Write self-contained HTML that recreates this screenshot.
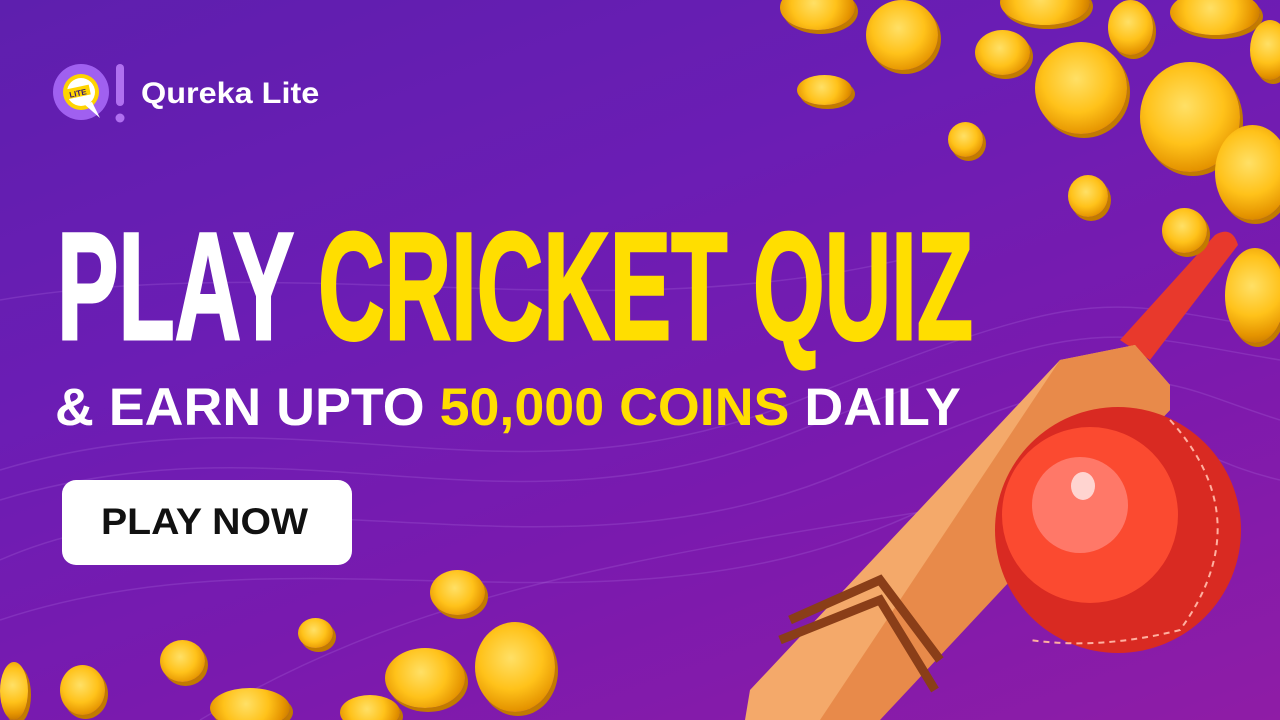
<!DOCTYPE html>
<html><head><meta charset="utf-8"><style>
*{margin:0;padding:0}
html,body{width:1280px;height:720px;overflow:hidden}
body{position:relative;font-family:"Liberation Sans",sans-serif;
background:linear-gradient(160deg,#5e1fae 0%,#6b1db4 35%,#7a1aae 65%,#8f1ca6 100%)}
.t{position:absolute;white-space:nowrap;font-weight:bold;transform-origin:0 0}
.coin{position:absolute;border-radius:50%;background:radial-gradient(circle at 45% 40%,#ffe066 0,#ffc21a 45%,#e59400 75%,#b86a00 100%);box-shadow:3px 4px 0 #c27a00}
</style></head><body>
<svg style="position:absolute;left:0;top:0" width="1280" height="720">
<g fill="none" stroke="#b070e0" stroke-opacity=".25" stroke-width="1.5">
<path d="M0 470 C300 380 500 520 800 400 S1100 300 1280 330"/>
<path d="M0 500 C300 410 500 550 800 430 S1100 330 1280 360"/>
<path d="M0 560 C250 450 550 600 850 470 S1150 380 1280 420"/>
<path d="M0 620 C300 520 600 650 900 520 S1150 450 1280 480"/>
<path d="M200 720 C400 600 600 560 1000 500"/>
<path d="M0 300 C300 250 600 330 900 260"/>
</g>
</svg>
<svg style="position:absolute;left:48px;top:60px" width="85" height="68">
<circle cx="33" cy="32" r="28" fill="#a060f0"/>
<circle cx="33" cy="32" r="18" fill="#ffd400"/>
<circle cx="33" cy="32" r="14" fill="#fff"/>
<path d="M36 44 L52 58 L44 42Z" fill="#fff"/>
<rect x="18" y="27" width="24" height="10" fill="#ffd400" transform="rotate(-12 30 32)"/>
<text x="21" y="36" font-size="8" font-weight="bold" fill="#3a1a70" font-family="Liberation Sans" transform="rotate(-12 30 32)">LITE</text>
<rect x="68" y="4" width="8" height="42" rx="4" fill="#b070f0"/>
<circle cx="72" cy="58" r="4.5" fill="#b070f0"/>
</svg>
<div class="t" style="left:141px;top:77px;font-size:30px;color:#fff;transform:scaleX(1.08)">Qureka Lite</div>
<div class="t" style="left:57px;top:210px;font-size:153px;line-height:153px;color:#fff;transform:scaleX(.602);-webkit-text-stroke:3px currentColor">PLAY <span style="color:#ffde00">CRICKET QUIZ</span></div>
<div class="t" style="left:55px;top:381px;font-size:53px;line-height:53px;color:#fff;transform:scaleX(1.015)">&amp; EARN UPTO <span style="color:#ffde00">50,000 COINS</span> DAILY</div>
<div style="position:absolute;left:62px;top:480px;width:290px;height:85px;background:#fff;border-radius:14px"></div>
<div class="t" style="left:101px;top:502px;font-size:37px;line-height:40px;color:#111;transform:scaleX(1.06)">PLAY NOW</div>
<svg style="position:absolute;left:0;top:0" width="1280" height="720">
<path d="M1120 340 L1215 235 Q1232 225 1238 245 L1150 360Z" fill="#e8392c"/>
<path d="M1060 360 L1135 345 L1170 385 L1170 410 L870 720 L745 720 L750 690 Z" fill="#f4a96a"/>
<path d="M1060 360 L1135 345 L1170 385 L1170 410 L880 720 L820 720 Z" fill="#e88a4a"/>
<path d="M790 620 L880 580 L940 660" fill="none" stroke="#8a3e18" stroke-width="9"/>
<path d="M780 640 L880 600 L935 690" fill="none" stroke="#8a3e18" stroke-width="9"/>
<circle cx="1118" cy="530" r="123" fill="#d92a22"/>
<circle cx="1090" cy="515" r="88" fill="#fb4a30"/>
<circle cx="1080" cy="505" r="48" fill="#ff7868"/>
<ellipse cx="1083" cy="486" rx="12" ry="14" fill="#ffd4d0"/>
<path d="M1170 420 Q1260 520 1180 630 Q1100 650 1030 640" fill="none" stroke="#ffb0a0" stroke-width="2" stroke-dasharray="6 5"/>
</svg>
<div class="coin" style="left:780px;top:-15px;width:75px;height:45px"></div>
<div class="coin" style="left:866px;top:0px;width:72px;height:70px"></div>
<div class="coin" style="left:975px;top:30px;width:55px;height:45px"></div>
<div class="coin" style="left:797px;top:75px;width:55px;height:30px"></div>
<div class="coin" style="left:1000px;top:-20px;width:90px;height:45px"></div>
<div class="coin" style="left:1035px;top:42px;width:92px;height:92px"></div>
<div class="coin" style="left:1108px;top:0px;width:45px;height:55px"></div>
<div class="coin" style="left:1170px;top:-10px;width:90px;height:45px"></div>
<div class="coin" style="left:1140px;top:62px;width:100px;height:110px"></div>
<div class="coin" style="left:1250px;top:20px;width:40px;height:60px"></div>
<div class="coin" style="left:1215px;top:125px;width:75px;height:95px"></div>
<div class="coin" style="left:948px;top:122px;width:35px;height:35px"></div>
<div class="coin" style="left:1068px;top:175px;width:40px;height:42px"></div>
<div class="coin" style="left:1162px;top:208px;width:45px;height:45px"></div>
<div class="coin" style="left:1225px;top:248px;width:60px;height:95px"></div>
<div class="coin" style="left:430px;top:570px;width:55px;height:45px"></div>
<div class="coin" style="left:298px;top:618px;width:35px;height:30px"></div>
<div class="coin" style="left:160px;top:640px;width:45px;height:42px"></div>
<div class="coin" style="left:385px;top:648px;width:80px;height:60px"></div>
<div class="coin" style="left:475px;top:622px;width:80px;height:90px"></div>
<div class="coin" style="left:60px;top:665px;width:45px;height:50px"></div>
<div class="coin" style="left:210px;top:688px;width:80px;height:40px"></div>
<div class="coin" style="left:0px;top:662px;width:28px;height:58px"></div>
<div class="coin" style="left:340px;top:695px;width:60px;height:35px"></div>
</body></html>
